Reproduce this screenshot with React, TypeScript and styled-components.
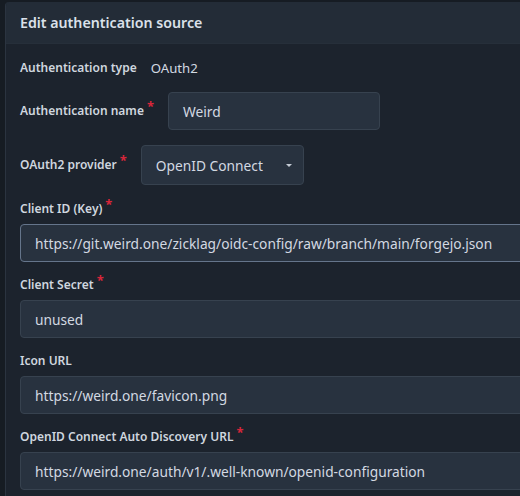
import React from "react";
import styled, { createGlobalStyle } from "styled-components";

const Global = createGlobalStyle`
  html, body { margin: 0; padding: 0; background: #161c23; }
  body { font-family: "Noto Sans", "Open Sans", sans-serif; color: #d3d9e2; }
  * { box-sizing: border-box; }
`;

const Page = styled.div`
  width: 520px;
  height: 496px;
  overflow: hidden;
  padding: 2px 0 0 5px;
`;

const Card = styled.div`
  width: 560px;
  border-left: 1px solid #2b3440;
  border-radius: 4px 0 0 0;
  overflow: hidden;
  background: #1c232d;
  min-height: 520px;
`;

const Header = styled.h4`
  margin: 0;
  height: 42px;
  display: flex;
  align-items: center;
  padding: 0 14px;
  background: #232c37;
  border-bottom: 1px solid #262f3a;
  font-size: 14.2px;
  font-weight: 600;
  color: #dbe1ea;
`;

const Body = styled.div`
  padding: 12px 14px;
  display: flex;
  flex-direction: column;
`;

const InlineField = styled.div<{ $h: number; $mt: number }>`
  display: flex;
  align-items: center;
  height: ${(p) => p.$h}px;
  margin-top: ${(p) => p.$mt}px;
  gap: 14px;
`;

const StackField = styled.div<{ $mt: number }>`
  display: flex;
  flex-direction: column;
  gap: 7px;
  margin-top: ${(p) => p.$mt}px;
`;

const Label = styled.label`
  font-size: 12px;
  line-height: 16px;
  font-weight: 600;
  color: #cfd6df;
  display: inline-flex;
  align-items: flex-start;
  gap: 3px;
`;

const Star = styled.span`
  color: #d7263a;
  font-size: 13px;
  font-weight: 700;
  line-height: 1;
  margin-top: -3px;
`;

const Value = styled.span`
  font-size: 13.2px;
  color: #d3d9e2;
`;

const Input = styled.div<{ $w?: number; $active?: boolean }>`
  width: ${(p) => (p.$w ? `${p.$w}px` : "100%")};
  height: 38px;
  display: flex;
  align-items: center;
  padding: 0 14px;
  background: #28323f;
  border: 1px solid ${(p) => (p.$active ? "#65758b" : "#37424f")};
  border-radius: 4px;
  font-size: 13.75px;
  color: #d3d9e2;
  white-space: nowrap;
`;

const Select = styled(Input)`
  height: 40px;
  justify-content: space-between;
`;

const Caret = styled.span`
  width: 0;
  height: 0;
  border-left: 3.5px solid transparent;
  border-right: 3.5px solid transparent;
  border-top: 3.5px solid #c5ccd6;
  margin-right: -3px;
`;

const Req = () => <Star>*</Star>;

export default function App() {
  return (
    <>
      <Global />
      <Page>
        <Card>
          <Header>Edit authentication source</Header>
          <Body>
            <InlineField $h={24} $mt={0}>
              <Label>Authentication type</Label>
              <Value>OAuth2</Value>
            </InlineField>
            <InlineField $h={38} $mt={12}>
              <Label>
                Authentication name<Req />
              </Label>
              <Input $w={212}>Weird</Input>
            </InlineField>
            <InlineField $h={40} $mt={15}>
              <Label>
                OAuth2 provider<Req />
              </Label>
              <Select $w={163}>
                OpenID Connect
                <Caret />
              </Select>
            </InlineField>
            <StackField $mt={16}>
              <Label>
                Client ID (Key)<Req />
              </Label>
              <Input $active>
                https://git.weird.one/zicklag/oidc-config/raw/branch/main/forgejo.json
              </Input>
            </StackField>
            <StackField $mt={15}>
              <Label>
                Client Secret<Req />
              </Label>
              <Input>unused</Input>
            </StackField>
            <StackField $mt={15}>
              <Label>Icon URL</Label>
              <Input>https://weird.one/favicon.png</Input>
            </StackField>
            <StackField $mt={15}>
              <Label>
                OpenID Connect Auto Discovery URL<Req />
              </Label>
              <Input>https://weird.one/auth/v1/.well-known/openid-configuration</Input>
            </StackField>
          </Body>
        </Card>
      </Page>
    </>
  );
}
